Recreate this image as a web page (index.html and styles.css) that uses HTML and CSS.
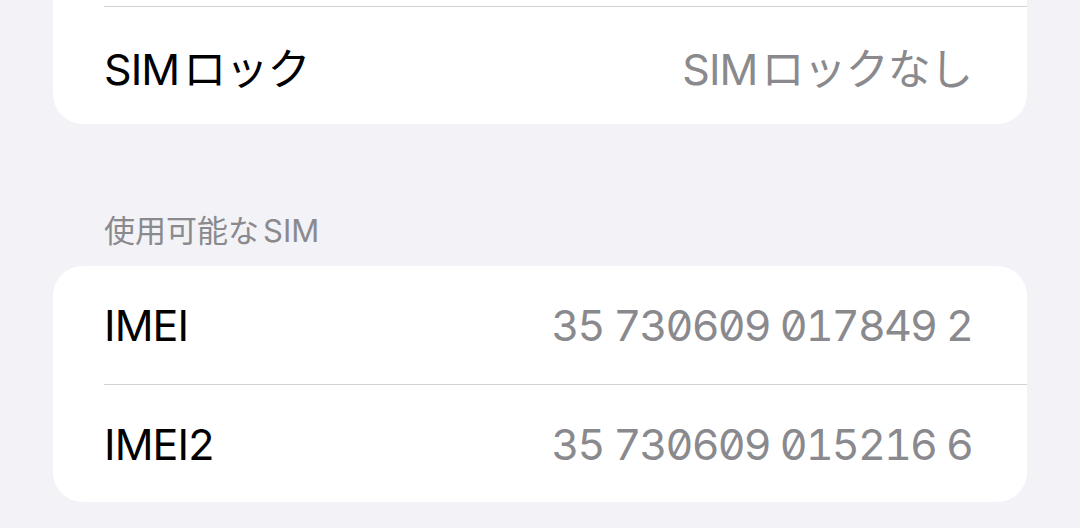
FILE: index.html
```html
<!DOCTYPE html>
<html lang="ja">
<head>
    <meta charset="UTF-8">
    <meta name="viewport" content="width=device-width, initial-scale=1.0">
    <title>情報</title>
    <link rel="stylesheet" href="styles.css">
</head>
<body>
    <div class="page">
        <!-- SIMロック -->
        <div class="group first">
            <div class="row"></div>
            <div class="row">
                <span class="label">SIM<span class="gap"></span>ロック</span>
                <span class="value">SIM<span class="gap"></span>ロックなし</span>
            </div>
        </div>

        <!-- 使用可能なSIM -->
        <div class="section-title">使用可能な<span class="gap"></span>SIM</div>
        <div class="group">
            <div class="row">
                <span class="label">IMEI</span>
                <span class="value num">35 730609 017849 2</span>
            </div>
            <div class="row">
                <span class="label">IMEI2</span>
                <span class="value num">35 730609 015216 6</span>
            </div>
        </div>
    </div>
</body>
</html>
```

FILE: styles.css
```css
* {
    margin: 0;
    padding: 0;
    box-sizing: border-box;
}

body {
    font-family: Inter, "Noto Sans CJK JP", sans-serif;
    background-color: #f2f2f7;
    color: #000;
    overflow: hidden;
}

.page {
    display: flex;
    flex-direction: column;
    padding: 0 53px;
    margin-top: -112px;
}

/* Grupo branco com cantos arredondados */
.group {
    background-color: #fff;
    border-radius: 30px;
    overflow: hidden;
}

.row {
    height: 118px;
    margin-left: 51px;
    padding-right: 55px;
    display: flex;
    justify-content: space-between;
    align-items: center;
}

.row + .row {
    border-top: 1px solid #d1d1d6;
}

.label {
    font-size: 43px;
    letter-spacing: -0.9px;
}

.value {
    font-size: 43px;
    color: #8a8a8e;
    letter-spacing: -0.9px;
}

.value.num {
    font-feature-settings: "tnum", "zero";
    letter-spacing: -1.8px;
}

/* pequeno espaço entre latim e kana */
.gap {
    display: inline-block;
    width: 4px;
}

.section-title {
    font-size: 31px;
    color: #8a8a8e;
    padding: 0 0 0 51px;
    margin: 87px 0 15px;
    line-height: 40px;
}
```
